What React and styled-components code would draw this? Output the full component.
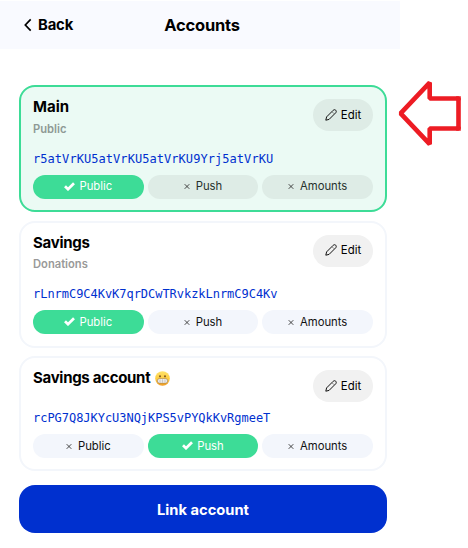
import React from "react";
import styled, { createGlobalStyle } from "styled-components";

const GlobalStyle = createGlobalStyle`
  * { box-sizing: border-box; }
  body { margin: 0; background: #fff; color: #000; font-family: Inter, sans-serif; }
  button { border: 0; font: inherit; color: inherit; padding: 0; cursor: pointer; }
`;

const Stage = styled.div`
  position: relative;
  width: 468px;
  height: 548px;
  overflow: hidden;
  padding-top: 1px;
`;

const Header = styled.header`
  width: 400px;
  height: 48px;
  display: grid;
  grid-template-columns: 100px 1fr 96px;
  align-items: center;
  background: #f9faff;
`;

const BackButton = styled.button`
  display: flex;
  align-items: center;
  gap: 6px;
  padding-left: 24px;
  background: none;
  font-size: 14.8px;
  font-weight: 700;
  line-height: 20px;
  letter-spacing: -0.15px;
`;

const Title = styled.h1`
  margin: -1px 0 0;
  text-align: center;
  font-size: 16.5px;
  font-weight: 700;
  line-height: 20px;
  letter-spacing: -0.2px;
`;

const List = styled.main`
  width: 368px;
  margin: 36px 0 0 19px;
  display: flex;
  flex-direction: column;
`;

const Card = styled.section`
  height: ${(p) => (p.$compact ? 115 : 127)}px;
  margin-bottom: ${(p) => (p.$compact ? 14.2 : 8.6)}px;
  padding: 12px;
  border: 2px solid ${(p) => (p.$active ? "#3ddc97" : "#f3f6fb")};
  border-radius: 16px;
  background: ${(p) => (p.$active ? "#ebfaf4" : "#fff")};
`;

const CardTop = styled.div`
  display: flex;
  justify-content: space-between;
  height: ${(p) => (p.$compact ? 38 : 49.6)}px;
`;

const Name = styled.h2`
  margin: -2px 0 0;
  display: flex;
  align-items: center;
  gap: 5px;
  font-size: 15px;
  font-weight: 700;
  line-height: 20px;
  letter-spacing: ${(p) => p.$track || 0}px;
`;

const Kind = styled.p`
  margin: 3.5px 0 0;
  font-size: 11.2px;
  font-weight: 600;
  line-height: 16px;
  color: ${(p) => (p.$active ? "#8e9994" : "#999")};
`;

const EditButton = styled.button`
  flex: none;
  width: 60px;
  height: 32px;
  border-radius: 16px;
  display: flex;
  align-items: center;
  justify-content: center;
  gap: 4px;
  padding-bottom: 1px;
  background: ${(p) => (p.$active ? "#deece6" : "#f1f1f1")};
  font-size: 11.4px;
  font-weight: 400;
`;

const Address = styled.div`
  height: 26px;
  font-family: "DejaVu Sans Mono", monospace;
  font-size: 12px;
  line-height: 21px;
  letter-spacing: ${(p) => p.$track}px;
  color: #0030cf;
  white-space: nowrap;
`;

const Pills = styled.div`
  display: grid;
  grid-template-columns: repeat(3, 1fr);
  gap: 4px;
`;

const Pill = styled.div`
  height: 24px;
  border-radius: 12px;
  display: flex;
  align-items: center;
  justify-content: center;
  gap: ${(p) => (p.$on ? 4 : 6)}px;
  padding-bottom: 1px;
  font-size: 11.3px;
  font-weight: 400;
  color: ${(p) => (p.$on ? "#fff" : p.$active ? "#26312c" : "#111")};
  background: ${(p) => (p.$on ? "#3ddc97" : p.$active ? "#deece6" : "#f3f6fc")};
`;

const LinkButton = styled.button`
  height: 48px;
  border-radius: 16px;
  background: #0030cf;
  color: #fff;
  font-size: 14.7px;
  font-weight: 700;
  padding-top: 1px;
`;

const Arrow = styled.svg`
  position: absolute;
  left: 396px;
  top: 78px;
`;

const Chevron = () => (
  <svg width="8" height="14" viewBox="0 0 8 14" fill="none" stroke="#000" strokeWidth="1.7">
    <path d="M6.7 1.4 1.3 7l5.4 5.6" />
  </svg>
);

const Pencil = () => (
  <svg width="12" height="12" viewBox="0 0 12 12" fill="none" stroke="#111" strokeWidth="1" strokeLinejoin="round">
    <path d="M.8 11.2 1.6 7.9 8.2 1.3C9 .5 10 .5 10.7 1.2S11.5 3 10.7 3.8L4.1 10.4ZM7.8 3.5l.8.8" />
  </svg>
);

const Check = () => (
  <svg width="11" height="9" viewBox="0 0 11 9" fill="none" stroke="#fff" strokeWidth="2.7">
    <path d="m1 4.2 3 3L10 1.2" />
  </svg>
);

const Cross = () => (
  <svg width="6" height="6" viewBox="0 0 6 6" fill="none" stroke="#333" strokeWidth="0.9">
    <path d="m.7 1.2 4.6 4.6m0-4.6L.7 5.8" />
  </svg>
);

const Grimace = () => (
  <svg width="15" height="15" viewBox="0 0 15 15" role="img" aria-label="😬">
    <defs>
      <linearGradient id="face" x2="0" y2="1">
        <stop stopColor="#ffe36a" />
        <stop offset=".55" stopColor="#fdcb3f" />
        <stop offset="1" stopColor="#ee9a25" />
      </linearGradient>
    </defs>
    <circle cx="7.5" cy="7.5" r="7.3" fill="url(#face)" />
    <ellipse cx="5" cy="5.3" rx=".85" ry="1.15" fill="#67411c" />
    <ellipse cx="10" cy="5.3" rx=".85" ry="1.15" fill="#67411c" />
    <rect x="2.3" y="7.7" width="10.4" height="4.4" rx="2.2" fill="#fff" stroke="#94764d" strokeWidth=".6" />
    <path d="M3 10h9M5 8.2v3.6M7.5 8.2v3.6M10 8.2v3.6" stroke="#aaa7a0" strokeWidth=".5" />
  </svg>
);

const accounts = [
  { name: "Main", kind: "Public", active: true, address: "r5atVrKU5atVrKU5atVrKU9Yrj5atVrKU", on: "Public", monoTrack: 0.055 },
  { name: "Savings", kind: "Donations", address: "rLnrmC9C4KvK7qrDCwTRvkzkLnrmC9C4Kv", on: "Public", track: -0.28, monoTrack: -0.035 },
  { name: "Savings account", emoji: true, address: "rcPG7Q8JKYcU3NQjKPS5vPYQkKvRgmeeT", on: "Push", track: -0.3, monoTrack: -0.035 },
];

function AccountCard({ account }) {
  const { name, kind, active, address, on, emoji, track, monoTrack } = account;
  return (
    <Card $active={active} $compact={!kind}>
      <CardTop $compact={!kind}>
        <div>
          <Name $track={track}>{name}{emoji && <Grimace />}</Name>
          {kind && <Kind $active={active}>{kind}</Kind>}
        </div>
        <EditButton $active={active}><Pencil />Edit</EditButton>
      </CardTop>
      <Address $track={monoTrack}>{address}</Address>
      <Pills>
        {["Public", "Push", "Amounts"].map((label) => (
          <Pill key={label} $on={label === on} $active={active}>
            {label === on ? <Check /> : <Cross />}
            <span>{label}</span>
          </Pill>
        ))}
      </Pills>
    </Card>
  );
}

export default function App() {
  return (
    <Stage>
      <GlobalStyle />
      <Header>
        <BackButton><Chevron />Back</BackButton>
        <Title>Accounts</Title>
      </Header>
      <List>
        {accounts.map((a) => <AccountCard key={a.name} account={a} />)}
        <LinkButton>Link account</LinkButton>
      </List>
      <Arrow width="72" height="72" viewBox="396 78 72 72" fill="none" stroke="#ed1c24" strokeWidth="4.6" strokeLinejoin="bevel">
        <path d="M400.6 113.3 429.7 82.6V98.5H458.5V128.5H429.7V144.2Z" />
        <path d="M456.2 96.2h4.6v4h-4.6zM456.2 126.8h4.6v4h-4.6z" fill="#ed1c24" stroke="none" />
      </Arrow>
    </Stage>
  );
}
